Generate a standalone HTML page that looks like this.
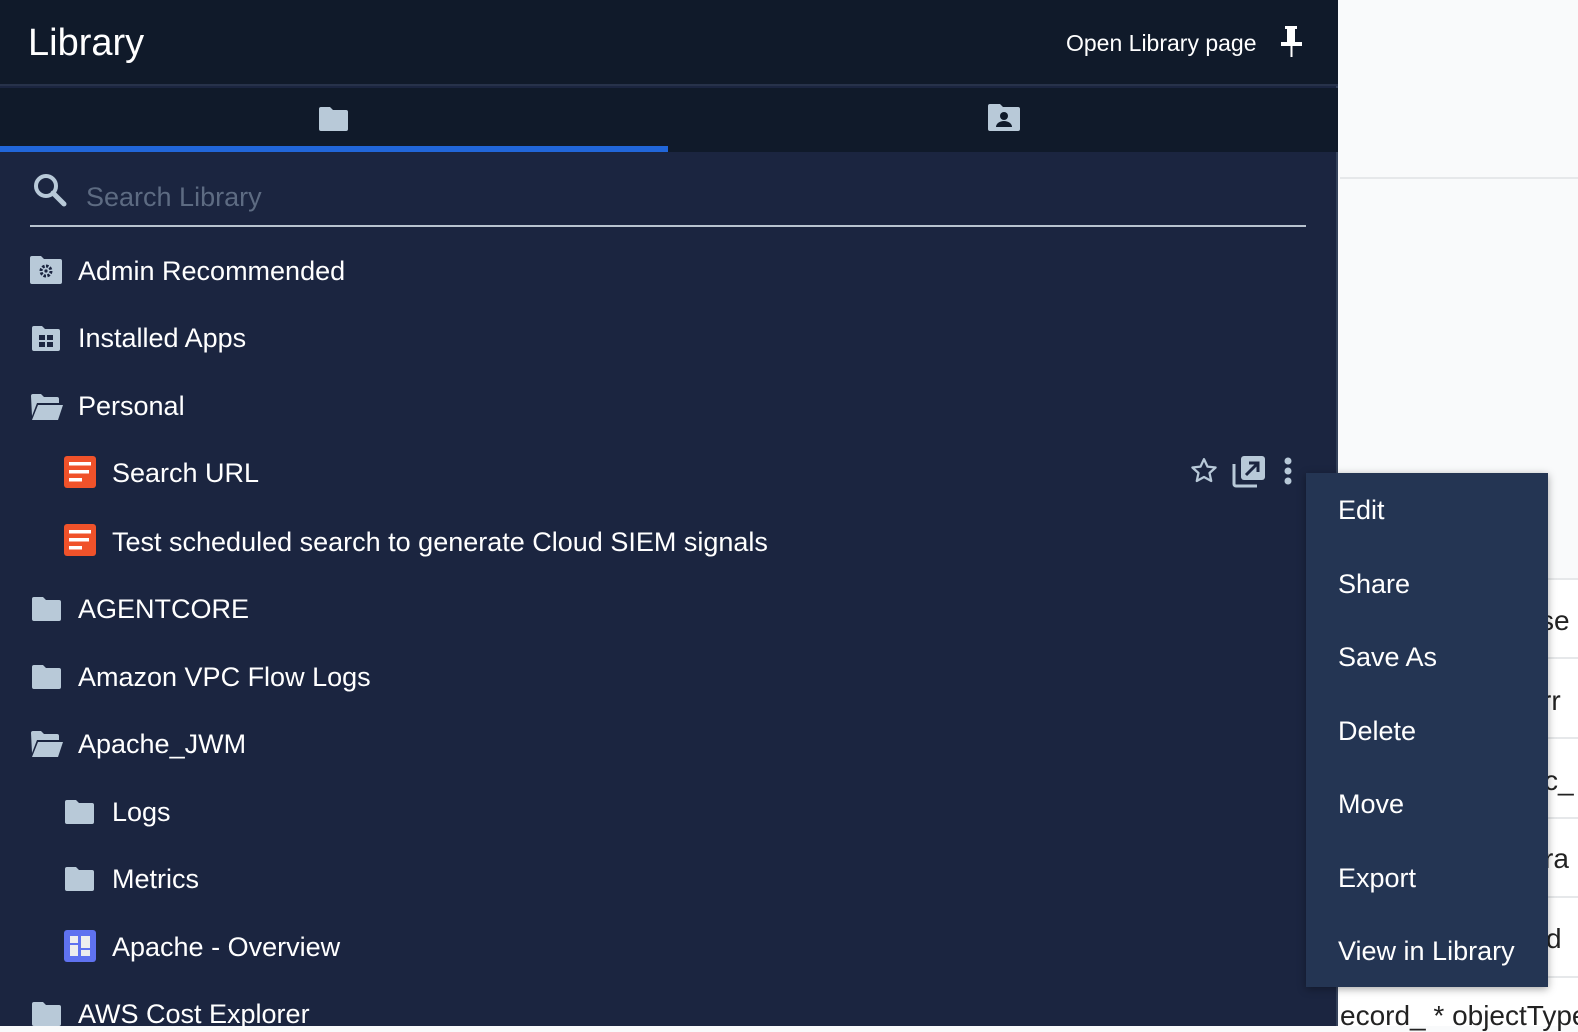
<!DOCTYPE html>
<html><head><meta charset="utf-8"><style>
*{margin:0;padding:0;box-sizing:border-box}
body{width:1578px;height:1026px;overflow:hidden;background:#f9fafb;font-family:"Liberation Sans",sans-serif;position:relative}
.panel{position:absolute;left:0;top:0;width:1338px;height:1026px;background:#1b2540;border-right:2px solid #34415a}
.hdr{position:absolute;left:0;top:0;width:1338px;height:86px;background:#101a2a;border-bottom:2px solid #27324a}
.tabs{position:absolute;left:0;top:88px;width:1338px;height:64px;background:#101a2a}
.ul{position:absolute;left:0;top:146px;width:668px;height:6px;background:#2166d9}
.t{position:absolute;color:#fff;font-size:27px;white-space:nowrap;line-height:32px}
.ic{position:absolute}
.menu{position:absolute;left:1306px;top:473px;width:242px;height:514px;background:#243553;box-shadow:0 2px 8px rgba(0,0,0,.35)}
.mi{position:absolute;left:32px;color:#fff;font-size:27px;line-height:32px}
.rl{position:absolute;left:1340px;width:238px;height:2px;background:#e6e8ea}
.rt{position:absolute;color:#222;font-size:28px;line-height:32px;white-space:nowrap}
</style></head><body>
<div style="position:absolute;left:1340px;top:578px;width:238px;height:448px;background:#fff"></div>
<div class="rl" style="top:177px"></div>
<div class="rl" style="top:578px"></div>
<div class="rl" style="top:657px"></div>
<div class="rl" style="top:737px"></div>
<div class="rl" style="top:817px"></div>
<div class="rl" style="top:896px"></div>
<div class="rl" style="top:976px"></div>
<div class="rt" style="left:1540px;top:605px">se</div>
<div class="rt" style="left:1542px;top:685px">rr</div>
<div class="rt" style="left:1544px;top:765px">c_</div>
<div class="rt" style="left:1544px;top:843px">ra</div>
<div class="rt" style="left:1546px;top:923px">d</div>
<div class="rt" style="left:1340px;top:1000px">ecord_ * objectType</div>

<div class="panel">
<div class="hdr">
 <div class="t" style="left:28px;top:23px;font-size:38px;line-height:40px">Library</div>
 <div class="t" style="left:1066px;top:27px;font-size:23px">Open Library page</div>
 <svg class="ic" style="left:1280px;top:26px" width="24" height="32" viewBox="0 0 24 32"><rect x="5" y="0" width="12" height="3" fill="#fff"/><rect x="7" y="2" width="8" height="14" fill="#fff"/><rect x="1" y="16" width="21" height="4" fill="#fff"/><rect x="10.5" y="19" width="2" height="12" fill="#fff"/></svg>
</div>
<div class="tabs">
 <svg class="ic" style="left:319px;top:19px" width="29" height="24" viewBox="0 0 29 24"><path d="M0 2a2 2 0 0 1 2-2h9l3 3h13a2 2 0 0 1 2 2v17a2 2 0 0 1-2 2H2a2 2 0 0 1-2-2z" fill="#b8c9d8"/></svg>
 <svg class="ic" style="left:988px;top:16px" width="32" height="27" viewBox="0 0 32 27"><path d="M0 2a2 2 0 0 1 2-2h10l3 3h15a2 2 0 0 1 2 2v20a2 2 0 0 1-2 2H2a2 2 0 0 1-2-2z" fill="#b8c9d8"/><circle cx="16" cy="12" r="4" fill="#101a2a"/><path d="M8 23a8 6 0 0 1 16 0z" fill="#101a2a"/></svg>
</div>
<div class="ul"></div>
<svg class="ic" style="left:32px;top:172px" width="36" height="36" viewBox="0 0 36 36"><circle cx="14" cy="14" r="10" fill="none" stroke="#b8c9d8" stroke-width="4"/><path d="M21 21l11 11" stroke="#b8c9d8" stroke-width="5" stroke-linecap="round"/></svg>
<div class="t" style="left:86px;top:181px;color:#5d6b82;font-size:27px">Search Library</div>
<div style="position:absolute;left:30px;top:225px;width:1276px;height:2px;background:#b8c3cf"></div>

<svg class="ic" style="left:30px;top:256px" width="32" height="28" viewBox="0 0 32 28"><path d="M0 2a2 2 0 0 1 2-2h9l3 3h16a2 2 0 0 1 2 2v21a2 2 0 0 1-2 2H2a2 2 0 0 1-2-2z" fill="#b8c9d8"/><circle cx="16" cy="15" r="5" fill="none" stroke="#1b2540" stroke-width="3" stroke-dasharray="2.5 1.4"/><circle cx="16" cy="15" r="1.6" fill="#1b2540"/></svg>
<div class="t" style="left:78px;top:255px">Admin Recommended</div>

<svg class="ic" style="left:32px;top:326px" width="28" height="25" viewBox="0 0 28 25"><path d="M0 2a2 2 0 0 1 2-2h8l3 3h13a2 2 0 0 1 2 2v18a2 2 0 0 1-2 2H2a2 2 0 0 1-2-2z" fill="#b8c9d8"/><rect x="7" y="9" width="6" height="5" fill="#1b2540"/><rect x="15" y="9" width="6" height="5" fill="#1b2540"/><rect x="7" y="16" width="6" height="5" fill="#1b2540"/><rect x="15" y="16" width="6" height="5" fill="#1b2540"/></svg>
<div class="t" style="left:78px;top:322px">Installed Apps</div>

<svg class="ic" style="left:31px;top:394px" width="32" height="26" viewBox="0 0 32 26"><path d="M0 2a2 2 0 0 1 2-2h8l3 3h13a2 2 0 0 1 2 2v4H6L1 22z" fill="#b8c9d8"/><path d="M7 11h25l-5 15H1z" fill="#b8c9d8"/></svg>
<div class="t" style="left:78px;top:390px">Personal</div>

<svg class="ic" style="left:64px;top:456px" width="32" height="32" viewBox="0 0 32 32"><rect width="32" height="32" rx="3" fill="#f0522a"/><rect x="5" y="6" width="22" height="3.5" fill="#fff"/><rect x="5" y="14" width="20" height="3.5" fill="#fff"/><rect x="5" y="22" width="13" height="3.5" fill="#fff"/></svg>
<div class="t" style="left:112px;top:457px">Search URL</div>
<svg class="ic" style="left:1189px;top:456px" width="30" height="30" viewBox="0 0 24 24"><path d="M12 2.5l2.8 6 6.5.7-4.9 4.4 1.4 6.4L12 16.8 6.2 20l1.4-6.4L2.7 9.2l6.5-.7z" fill="none" stroke="#b8c9d8" stroke-width="1.8" stroke-linejoin="round"/></svg>
<svg class="ic" style="left:1231px;top:456px" width="34" height="32" viewBox="0 0 34 32"><rect x="10" y="0" width="24" height="24" rx="3" fill="#b8c9d8"/><path d="M3 8v20a2 2 0 0 0 2 2h21" fill="none" stroke="#b8c9d8" stroke-width="3"/><path d="M15 19l11-11M18 7h9v9" fill="none" stroke="#1b2540" stroke-width="3"/></svg>
<svg class="ic" style="left:1282px;top:456px" width="12" height="32" viewBox="0 0 12 32"><circle cx="6" cy="5" r="3.5" fill="#b8c9d8"/><circle cx="6" cy="15" r="3.5" fill="#b8c9d8"/><circle cx="6" cy="25" r="3.5" fill="#b8c9d8"/></svg>

<svg class="ic" style="left:64px;top:524px" width="32" height="32" viewBox="0 0 32 32"><rect width="32" height="32" rx="3" fill="#f0522a"/><rect x="5" y="6" width="22" height="3.5" fill="#fff"/><rect x="5" y="14" width="20" height="3.5" fill="#fff"/><rect x="5" y="22" width="13" height="3.5" fill="#fff"/></svg>
<div class="t" style="left:112px;top:526px">Test scheduled search to generate Cloud SIEM signals</div>

<svg class="ic" style="left:32px;top:597px" width="29" height="24" viewBox="0 0 29 24"><path d="M0 2a2 2 0 0 1 2-2h9l3 3h13a2 2 0 0 1 2 2v17a2 2 0 0 1-2 2H2a2 2 0 0 1-2-2z" fill="#b8c9d8"/></svg>
<div class="t" style="left:78px;top:593px">AGENTCORE</div>

<svg class="ic" style="left:32px;top:665px" width="29" height="24" viewBox="0 0 29 24"><path d="M0 2a2 2 0 0 1 2-2h9l3 3h13a2 2 0 0 1 2 2v17a2 2 0 0 1-2 2H2a2 2 0 0 1-2-2z" fill="#b8c9d8"/></svg>
<div class="t" style="left:78px;top:661px">Amazon VPC Flow Logs</div>

<svg class="ic" style="left:31px;top:731px" width="32" height="26" viewBox="0 0 32 26"><path d="M0 2a2 2 0 0 1 2-2h8l3 3h13a2 2 0 0 1 2 2v4H6L1 22z" fill="#b8c9d8"/><path d="M7 11h25l-5 15H1z" fill="#b8c9d8"/></svg>
<div class="t" style="left:78px;top:728px">Apache_JWM</div>

<svg class="ic" style="left:65px;top:800px" width="29" height="24" viewBox="0 0 29 24"><path d="M0 2a2 2 0 0 1 2-2h9l3 3h13a2 2 0 0 1 2 2v17a2 2 0 0 1-2 2H2a2 2 0 0 1-2-2z" fill="#b8c9d8"/></svg>
<div class="t" style="left:112px;top:796px">Logs</div>

<svg class="ic" style="left:65px;top:867px" width="29" height="24" viewBox="0 0 29 24"><path d="M0 2a2 2 0 0 1 2-2h9l3 3h13a2 2 0 0 1 2 2v17a2 2 0 0 1-2 2H2a2 2 0 0 1-2-2z" fill="#b8c9d8"/></svg>
<div class="t" style="left:112px;top:863px">Metrics</div>

<svg class="ic" style="left:64px;top:930px" width="32" height="32" viewBox="0 0 32 32"><rect width="32" height="32" rx="3" fill="#5f72f0"/><rect x="6" y="6" width="8" height="7" fill="#eee"/><rect x="6" y="15" width="8" height="11" fill="#eee"/><rect x="17" y="6" width="9" height="12" fill="#eee"/><rect x="17" y="20" width="9" height="6" fill="#eee"/></svg>
<div class="t" style="left:112px;top:931px">Apache - Overview</div>

<svg class="ic" style="left:32px;top:1002px" width="29" height="24" viewBox="0 0 29 24"><path d="M0 2a2 2 0 0 1 2-2h9l3 3h13a2 2 0 0 1 2 2v17a2 2 0 0 1-2 2H2a2 2 0 0 1-2-2z" fill="#b8c9d8"/></svg>
<div class="t" style="left:78px;top:998px">AWS Cost Explorer</div>
</div>

<div class="menu">
 <div class="mi" style="top:21px">Edit</div>
 <div class="mi" style="top:95px">Share</div>
 <div class="mi" style="top:168px">Save As</div>
 <div class="mi" style="top:242px">Delete</div>
 <div class="mi" style="top:315px">Move</div>
 <div class="mi" style="top:389px">Export</div>
 <div class="mi" style="top:462px">View in Library</div>
</div>
</body></html>
